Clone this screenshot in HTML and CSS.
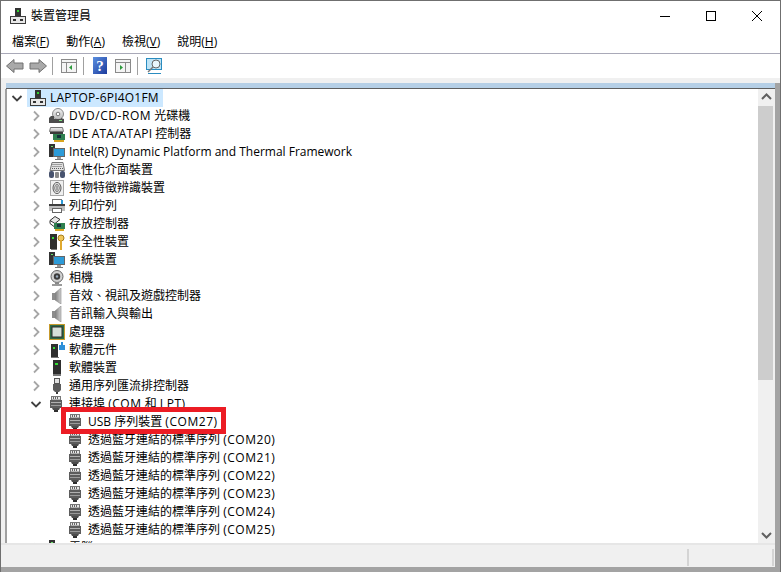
FILE: index.html
```html
<!DOCTYPE html>
<html lang="zh-Hant">
<head>
<meta charset="utf-8">
<title>裝置管理員</title>
<link rel="stylesheet" href="styles.css">
</head>
<body>
<svg class="defs" width="0" height="0">
  <defs>
    <linearGradient id="silver" x1="0" y1="0" x2="0" y2="1"><stop offset="0" stop-color="#f2f2f2"/><stop offset="1" stop-color="#b8b8b8"/></linearGradient>
    <linearGradient id="cone" x1="0" y1="0" x2="1" y2="0"><stop offset="0" stop-color="#7c7c7c"/><stop offset="1" stop-color="#d0d0d0"/></linearGradient>
    <linearGradient id="blue" x1="0" y1="0" x2="1" y2="1"><stop offset="0" stop-color="#5a8fe0"/><stop offset="1" stop-color="#1c3a9c"/></linearGradient>
  </defs>
  <symbol id="pc" viewBox="0 0 16 16"><rect x="5" y="0" width="6" height="9" fill="#333"/><rect x="7" y="2" width="2" height="2" fill="#30d030"/><rect x="0.500" y="8.500" width="15" height="7" fill="#e8e8e8" stroke="#3c3c3c"/><rect x="3" y="11" width="3" height="2" fill="#333"/><rect x="10" y="11" width="3" height="2" fill="#333"/></symbol>
  <symbol id="disc" viewBox="0 0 16 16"><circle cx="9" cy="6" r="5.500" fill="url(#silver)" stroke="#8a8a8a"/><circle cx="9" cy="6" r="1.800" fill="#fff" stroke="#777"/><path d="M0 10l2-2h3v3h7v-1l3 1v4H0z" fill="#4c4c4c"/><rect x="10" y="12" width="3" height="1" fill="#7fe07f"/></symbol>
  <symbol id="ide" viewBox="0 0 16 16"><path d="M1.500 1.500h12l1 4h-14z" fill="url(#silver)" stroke="#777"/><rect x="1" y="6" width="13" height="2" fill="#3a3a3a"/><rect x="4" y="8" width="12" height="6" fill="#2f8050"/><rect x="8" y="9" width="4" height="3" fill="#14303a"/><rect x="5" y="14" width="10" height="2" fill="#d9a520"/></symbol>
  <symbol id="sys" viewBox="0 0 16 16"><rect x="0" y="0" width="6" height="13" fill="#333"/><rect x="2" y="2" width="2" height="1" fill="#6d6"/><rect x="4.500" y="4.500" width="11" height="8" fill="#2d9bd8" stroke="#666"/><rect x="8" y="13" width="4" height="2" fill="#999"/><rect x="6" y="15" width="8" height="1" fill="#777"/></symbol>
  <symbol id="hid" viewBox="0 0 16 16"><path d="M3 .500h11l1.500 8H1z" fill="#e2e2e2" stroke="#777"/><path d="M3.500 2.500h10M3.500 4.500h10M3 6.500h11" stroke="#5c5c5c" stroke-dasharray="1 1"/><rect x="0" y="9" width="5" height="7" rx="2" fill="#48536e"/><rect x="11" y="9" width="5" height="7" rx="2" fill="#48536e"/><rect x="6" y="10" width="4" height="6" rx="1" fill="#8a8a8a"/></symbol>
  <symbol id="bio" viewBox="0 0 16 16"><rect x="1.500" y="0.500" width="13" height="15" fill="#efefef" stroke="#a8a8a8"/><ellipse cx="8" cy="8" rx="4" ry="5.500" fill="none" stroke="#555"/><ellipse cx="8" cy="8" rx="2.300" ry="3.600" fill="none" stroke="#777"/><path d="M8 5.500v5" stroke="#555"/></symbol>
  <symbol id="print" viewBox="0 0 16 16"><rect x="3.500" y="1.500" width="9" height="5" fill="#fff" stroke="#777"/><path d="M0 6h16v7H0z" fill="#bdbdbd"/><path d="M0 6h16v2H0z" fill="#3e3e3e"/><rect x="3.500" y="10.500" width="9" height="4" fill="#fff" stroke="#666"/><rect x="12" y="2" width="2" height="4" fill="#2d9bd8"/></symbol>
  <symbol id="storage" viewBox="0 0 16 16"><path d="M1 4.500 6 .5l5 3-5 4z" fill="#e6e6e6" stroke="#333"/><path d="M1 4.500v3l4 3" fill="none" stroke="#333"/><rect x="5" y="7" width="11" height="6" fill="#2f8050"/><rect x="8" y="8" width="4" height="3" fill="#14303a"/><rect x="6" y="13" width="9" height="2" fill="#d9a520"/></symbol>
  <symbol id="sec" viewBox="0 0 16 16"><rect x="1" y="0" width="7" height="15" fill="#2e2e2e"/><rect x="3" y="3" width="2" height="2" fill="#3d3"/><rect x="2" y="15" width="6" height="1" fill="#777"/><circle cx="12" cy="4" r="3" fill="#f0c75a" stroke="#a67c1a"/><rect x="11" y="6" width="2" height="10" fill="#e0a92e"/></symbol>
  <symbol id="cam" viewBox="0 0 16 16"><circle cx="8" cy="6.500" r="6" fill="#d0d0d0" stroke="#666"/><circle cx="8" cy="6.500" r="3.200" fill="#3c3c3c"/><circle cx="8" cy="6.500" r="1.200" fill="#9ab"/><rect x="6" y="12" width="4" height="2" fill="#888"/><rect x="3" y="14" width="10" height="2" fill="#9a9a9a"/></symbol>
  <symbol id="snd" viewBox="0 0 16 16"><rect x="3" y="5" width="4" height="7" fill="#8c8c8c"/><path d="M6 5 12 0v16L6 12z" fill="url(#cone)" stroke="#8a8a8a" stroke-width=".6"/></symbol>
  <symbol id="cpu" viewBox="0 0 16 16"><rect x="0" y="0" width="16" height="16" fill="#c79a2c"/><rect x="1" y="1" width="14" height="14" fill="#2f6b47"/><rect x="3" y="3" width="10" height="10" fill="#d6e0d8" stroke="#2a2a2a"/></symbol>
  <symbol id="comp" viewBox="0 0 16 16"><rect x="2" y="2" width="7" height="13" fill="#2e2e2e"/><rect x="4" y="5" width="2" height="2" fill="#3d3"/><rect x="2" y="15" width="8" height="1" fill="#777"/><path d="M10 3h2V0h2v3h2v5h-6z" fill="#2d8fd8"/></symbol>
  <symbol id="soft" viewBox="0 0 16 16"><rect x="4" y="0" width="8" height="14" fill="#2e2e2e"/><rect x="6" y="3" width="3" height="2" fill="#3d3"/><rect x="4" y="14" width="8" height="2" fill="#777"/></symbol>
  <symbol id="usb" viewBox="0 0 16 16"><rect x="5.500" y="0.500" width="5" height="5" fill="#e2e2e2" stroke="#555"/><path d="M4 6h8v6l-2 2H6l-2-2z" fill="#5c5c5c"/><rect x="7" y="14" width="2" height="2" fill="#3c3c3c"/></symbol>
  <symbol id="port" viewBox="0 0 16 16"><rect x="2.500" y="0.500" width="9" height="3.500" fill="#e8e8e8" stroke="#777"/><path d="M4.500 1v2M6.500 1v2M8.500 1v2" stroke="#666"/><rect x="1" y="4" width="12" height="8" fill="#5c5c5c"/><rect x="2" y="6" width="10" height="1" fill="#b0b0b0"/><rect x="2" y="9" width="10" height="1" fill="#9a9a9a"/><path d="M3 12h8l-1 2H4z" fill="#4c4c4c"/><rect x="5" y="14" width="4" height="2" fill="#2e2e2e"/></symbol>
  <symbol id="right" viewBox="0 0 16 16"><path d="M6 3.500l4.500 4.500-4.500 4.500" fill="none" stroke="#a6a6a6" stroke-width="1.800"/></symbol>
  <symbol id="down" viewBox="0 0 16 16"><path d="M3.500 6l4.500 4.500L12.500 6" fill="none" stroke="#404040" stroke-width="1.800"/></symbol>
</svg>
<div class="window">
  <header class="titlebar">
    <svg class="title-icon"><use href="#pc"/></svg>
    <span class="title-text">裝置管理員</span>
    <div class="caption">
      <svg class="cap" viewBox="0 0 46 30"><path d="M18 15.500h10" stroke="#000"/></svg>
      <svg class="cap" viewBox="0 0 46 30"><rect x="18.500" y="10.500" width="9" height="9" fill="none" stroke="#000"/></svg>
      <svg class="cap" viewBox="0 0 46 30"><path d="M18 10l10 10M28 10l-10 10" stroke="#000"/></svg>
    </div>
  </header>
  <nav class="menubar">
    <span class="menu">檔案(<u>F</u>)</span><span class="menu">動作(<u>A</u>)</span><span class="menu">檢視(<u>V</u>)</span><span class="menu">說明(<u>H</u>)</span>
  </nav>
  <div class="toolbar">
    <svg class="tool" viewBox="0 0 18 18"><path d="M.5 9l7.500-6.500V6h9v6H8v3.500z" fill="#a9a9a9" stroke="#707070"/></svg>
    <svg class="tool" viewBox="0 0 18 18"><path d="M17.500 9L10 2.500V6H1v6h9v3.500z" fill="#a9a9a9" stroke="#707070"/></svg>
    <i class="sep"></i>
    <svg class="tool" viewBox="0 0 18 18"><rect x="1.500" y="2.500" width="15" height="13" fill="#f4f4f4" stroke="#8a8a8a"/><path d="M1.500 5.500h15M6.500 5.500v10" stroke="#8a8a8a"/><path d="M12 8v5l-3-2.500z" fill="#2c9a3c"/></svg>
    <i class="sep"></i>
    <svg class="tool" viewBox="0 0 18 18"><rect x="2" y="0" width="14" height="17" fill="url(#blue)"/><text class="help" x="9" y="14" text-anchor="middle">?</text></svg>
    <svg class="tool" viewBox="0 0 18 18"><rect x="1.500" y="2.500" width="15" height="13" fill="#f4f4f4" stroke="#8a8a8a"/><path d="M1.500 5.500h15M11.500 5.500v10" stroke="#8a8a8a"/><path d="M6 8v5l3-2.500z" fill="#2c9a3c"/></svg>
    <i class="sep"></i>
    <svg class="tool" viewBox="0 0 18 18"><rect x="1" y="1" width="16" height="12" fill="#2a8cc0"/><rect x="2" y="2" width="14" height="10" fill="#bfe4f6"/><circle cx="11" cy="7" r="4" fill="#e8f6fc" stroke="#666"/><path d="M8 10 3 15" stroke="#777" stroke-width="1.500"/><path d="M3 16.500h13" stroke="#2a8cc0"/></svg>
  </div>
  <div class="content">
    <div class="frame">
      <div class="band"></div>
      <div class="tree-wrap">
        <div class="tree">
          <div class="row l0"><svg class="chev"><use href="#down"/></svg><span class="sel"><svg class="ico"><use href="#pc"/></svg><span class="lat-s">LAPTOP-6PI4O1FM</span></span></div>
          <div class="row l1"><svg class="chev"><use href="#right"/></svg><svg class="ico"><use href="#disc"/></svg><span><span class="lat">DVD/CD-ROM</span> 光碟機</span></div>
          <div class="row l1"><svg class="chev"><use href="#right"/></svg><svg class="ico"><use href="#ide"/></svg><span><span class="lat-s">IDE ATA/ATAPI</span> 控制器</span></div>
          <div class="row l1"><svg class="chev"><use href="#right"/></svg><svg class="ico"><use href="#sys"/></svg><span>Intel(R) Dynamic Platform and Thermal Framework</span></div>
          <div class="row l1"><svg class="chev"><use href="#right"/></svg><svg class="ico"><use href="#hid"/></svg><span>人性化介面裝置</span></div>
          <div class="row l1"><svg class="chev"><use href="#right"/></svg><svg class="ico"><use href="#bio"/></svg><span>生物特徵辨識裝置</span></div>
          <div class="row l1"><svg class="chev"><use href="#right"/></svg><svg class="ico"><use href="#print"/></svg><span>列印佇列</span></div>
          <div class="row l1"><svg class="chev"><use href="#right"/></svg><svg class="ico"><use href="#storage"/></svg><span>存放控制器</span></div>
          <div class="row l1"><svg class="chev"><use href="#right"/></svg><svg class="ico"><use href="#sec"/></svg><span>安全性裝置</span></div>
          <div class="row l1"><svg class="chev"><use href="#right"/></svg><svg class="ico"><use href="#sys"/></svg><span>系統裝置</span></div>
          <div class="row l1"><svg class="chev"><use href="#right"/></svg><svg class="ico"><use href="#cam"/></svg><span>相機</span></div>
          <div class="row l1"><svg class="chev"><use href="#right"/></svg><svg class="ico"><use href="#snd"/></svg><span>音效、視訊及遊戲控制器</span></div>
          <div class="row l1"><svg class="chev"><use href="#right"/></svg><svg class="ico"><use href="#snd"/></svg><span>音訊輸入與輸出</span></div>
          <div class="row l1"><svg class="chev"><use href="#right"/></svg><svg class="ico"><use href="#cpu"/></svg><span>處理器</span></div>
          <div class="row l1"><svg class="chev"><use href="#right"/></svg><svg class="ico"><use href="#comp"/></svg><span>軟體元件</span></div>
          <div class="row l1"><svg class="chev"><use href="#right"/></svg><svg class="ico"><use href="#soft"/></svg><span>軟體裝置</span></div>
          <div class="row l1"><svg class="chev"><use href="#right"/></svg><svg class="ico"><use href="#usb"/></svg><span>通用序列匯流排控制器</span></div>
          <div class="row l1"><svg class="chev"><use href="#down"/></svg><svg class="ico"><use href="#port"/></svg><span>連接埠 <span class="lat">(COM</span> 和 <span class="lat">LPT)</span></span></div>
          <div class="row l2"><svg class="ico"><use href="#port"/></svg><span>USB 序列裝置 <span class="lat">(COM27)</span></span></div>
          <div class="row l2"><svg class="ico"><use href="#port"/></svg><span>透過藍牙連結的標準序列 <span class="lat">(COM20)</span></span></div>
          <div class="row l2"><svg class="ico"><use href="#port"/></svg><span>透過藍牙連結的標準序列 <span class="lat">(COM21)</span></span></div>
          <div class="row l2"><svg class="ico"><use href="#port"/></svg><span>透過藍牙連結的標準序列 <span class="lat">(COM22)</span></span></div>
          <div class="row l2"><svg class="ico"><use href="#port"/></svg><span>透過藍牙連結的標準序列 <span class="lat">(COM23)</span></span></div>
          <div class="row l2"><svg class="ico"><use href="#port"/></svg><span>透過藍牙連結的標準序列 <span class="lat">(COM24)</span></span></div>
          <div class="row l2"><svg class="ico"><use href="#port"/></svg><span>透過藍牙連結的標準序列 <span class="lat">(COM25)</span></span></div>
          <div class="row l1"><svg class="chev"><use href="#right"/></svg><svg class="ico"><use href="#sys"/></svg><span>電腦</span></div>
        </div>
        <div class="scrollbar">
          <svg class="arrow" viewBox="0 0 17 17"><path d="M4 10l4.500-4.500L13 10" fill="none" stroke="#606060" stroke-width="2"/></svg>
          <div class="thumb"></div>
          <div class="track"></div>
          <svg class="arrow" viewBox="0 0 17 17"><path d="M4 7l4.500 4.500L13 7" fill="none" stroke="#606060" stroke-width="2"/></svg>
        </div>
        <div class="callout"></div>
      </div>
      <div class="status"><div class="pane wide"></div><div class="pane mid"></div></div>
    </div>
  </div>
</div>
</body>
</html>
```
FILE: styles.css
```css
* { box-sizing: border-box; }
html, body { margin: 0; height: 100%; overflow: hidden; }
body { font: 12px/18px "Open Sans", "Noto Sans CJK TC", sans-serif; color: #000; background: #fff; }
.defs { position: absolute; }
.window { width: 781px; height: 572px; display: flex; flex-direction: column; border: solid #6f6f6f; border-width: 1px 1px 0 1px; background: #fff; }
.titlebar { height: 29px; display: flex; align-items: center; padding-left: 9px; flex: none; }
.title-icon { width: 16px; height: 16px; }
.title-text { margin-left: 5px; }
.caption { margin-left: auto; display: flex; }
.cap { width: 46px; height: 30px; }
.menubar { height: 24px; flex: none; display: flex; align-items: center; padding-left: 11px; gap: 17px; border-bottom: 1px solid #a9a9b8; }
.toolbar { height: 24px; flex: none; display: flex; align-items: center; padding-left: 5px; gap: 5px; }
.tool { width: 18px; height: 18px; }
.sep + .tool { margin-left: 2px; }
.help { font: bold 15px "Liberation Serif", serif; fill: #fff; }
.sep { width: 1px; height: 18px; background: #a0a0a0; }
.content { flex: 1; min-height: 0; display: flex; flex-direction: column; background: #f0f0f0; padding-top: 5px; }
.frame { flex: 1; min-height: 0; display: flex; flex-direction: column; border: solid #a3a3a3; border-width: 0 5px 5px 0; }
.band { height: 6px; flex: none; margin-left: 5px; background: #b5cfe6; border-bottom: 1px solid #5f5f5f; }
.tree-wrap { position: relative; flex: 1; min-height: 0; display: flex; background: #fff; margin-left: 4px; border-left: 2px solid #a0a0a0; }
.tree { flex: 1; min-width: 0; overflow: hidden; }
.row { height: 18px; display: flex; align-items: center; white-space: nowrap; }
.lat { letter-spacing: .55px; }
.lat-s { letter-spacing: .22px; }
.l0 { padding-left: 2px; }
.l1 { padding-left: 21px; }
.l2 { padding-left: 61px; }
.chev { width: 16px; height: 16px; flex: none; margin-right: 5px; }
.l0 .chev { margin-right: 2px; }
.ico { width: 16px; height: 16px; flex: none; margin-right: 4px; }
.sel { display: flex; align-items: center; background: #cce8ff; height: 18px; padding: 0 4px 0 3px; }
.scrollbar { width: 17px; flex: none; display: flex; flex-direction: column; background: #f0f0f0; }
.arrow { width: 17px; height: 17px; flex: none; }
.thumb { height: 274px; flex: none; background: #cdcdcd; margin-right: 2px; }
.track { flex: 1; }
.callout { position: absolute; left: 54px; top: 318px; width: 165px; height: 27px; border: 5px solid #ec1c24; }
.status { height: 24px; flex: none; display: flex; padding: 4px 0 1px 4px; border-top: 2px solid #e6e6e6; }
.pane { border-right: 2px solid #d4d4d4; }
.wide { width: 684px; }
.mid { width: 85px; }
```
